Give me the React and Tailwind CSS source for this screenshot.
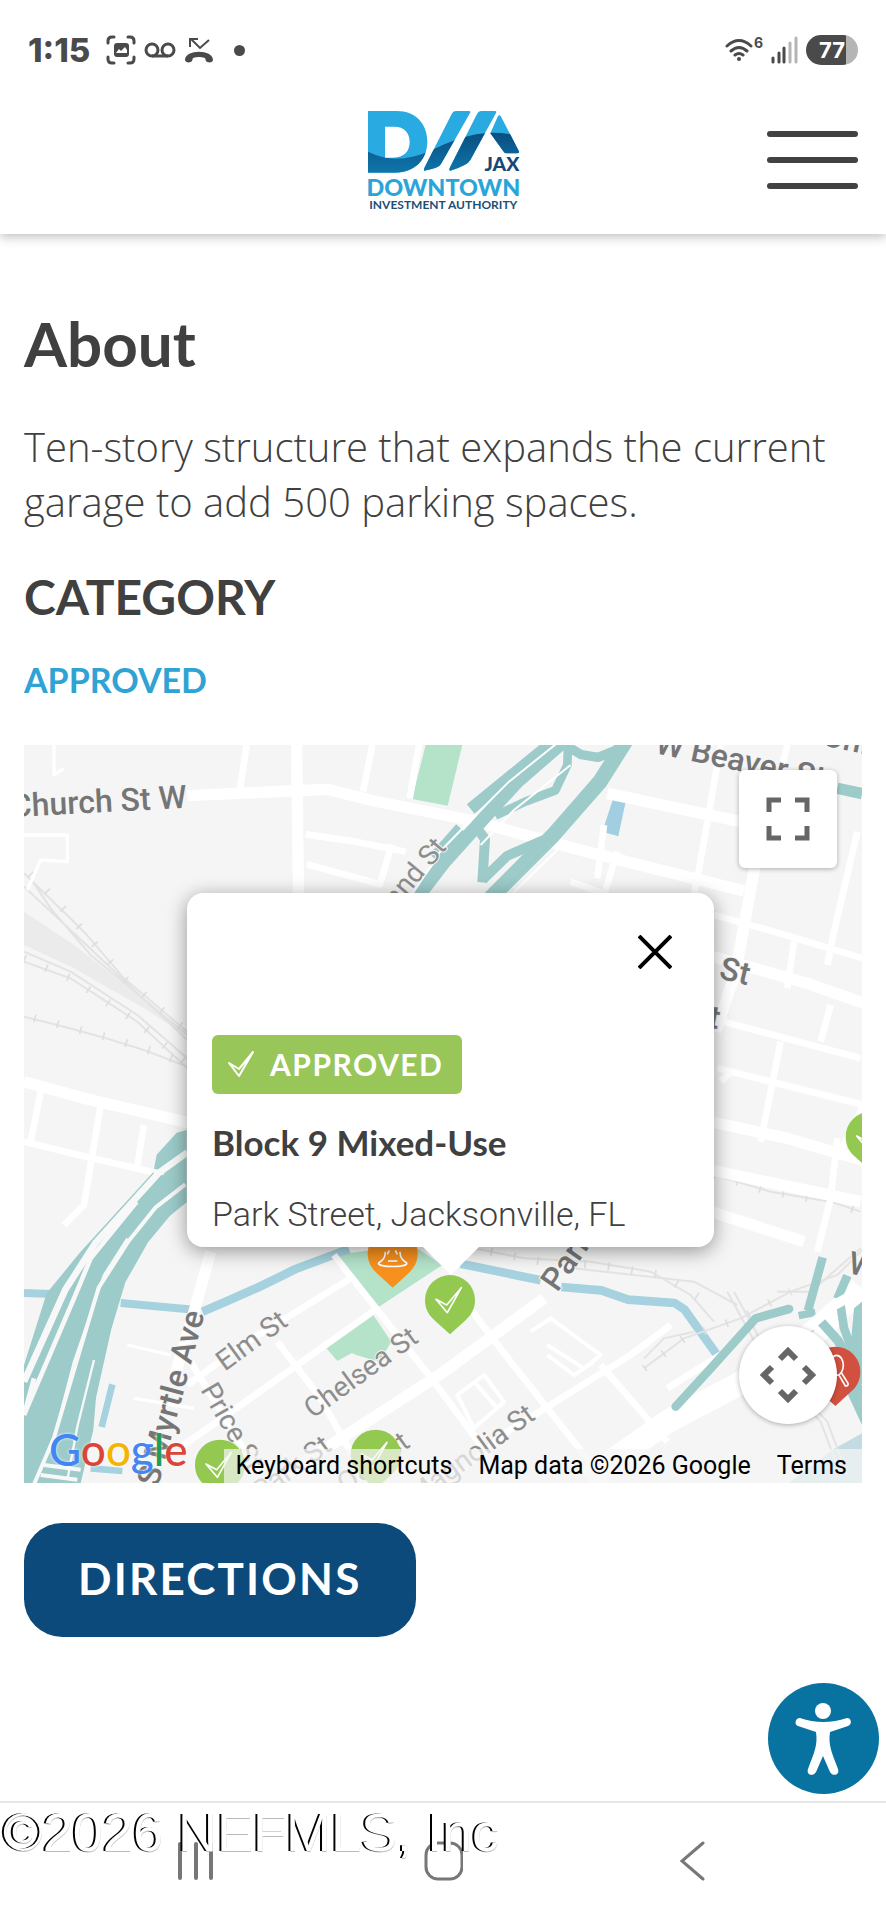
import React from 'react'
import clsx from 'clsx'

const PINS = [
  { x: 1106, y: 1450, color: '#f7901e', kind: 'cone' },
  { x: 1278, y: 1590, color: '#93c950', kind: 'check' },
  { x: 588, y: 2084, color: '#93c950', kind: 'check' },
  { x: 1055, y: 2054, color: '#93c950', kind: 'check' },
  { x: 2540, y: 1100, color: '#93c950', kind: 'check' },
  { x: 2434, y: 1805, color: '#d2503f', kind: 'search' },
]

function Pin({ x, y, color, kind }) {
  return (
    <g transform={`translate(${x} ${y})`}>
      <path d="M0 0a75 75 0 0 1 75 75c0 30-14 48-30 62L0 178l-45-41c-16-14-30-32-30-62A75 75 0 0 1 0 0z" fill={color} />
      {kind === 'check' && (
        <path d="M-42 73 L-10 90 L34 38 L-8 113 Z" fill="none" stroke="#fff" strokeWidth="5" strokeLinejoin="round" />
      )}
      {kind === 'cone' && (
        <path d="M-22 70 C-22 90 -30 96 -42 104 C-50 118 50 118 42 104 C30 96 22 90 22 70 M-14 98h28 M-16 78l6-12 M8 66l6 12" fill="none" stroke="#fff" strokeWidth="5" />
      )}
      {kind === 'search' && (
        <g fill="none" stroke="#fff" strokeWidth="5">
          <ellipse cx="4" cy="56" rx="20" ry="30" />
          <path d="M10 84l20 34q10 0 8-8L18 78" />
        </g>
      )}
    </g>
  )
}

function MapCanvas() {
  return (
    <svg viewBox="0 0 2514 2214" preserveAspectRatio="xMidYMid slice" className="block h-full w-full" aria-hidden="true">
      <rect width="2514" height="2214" fill="#f5f5f5" />

      {/* parks and water */}
      <g fill="#b4e3ca">
        <path d="M1205 0h110l-44 182-107-20z" />
        <path d="M930 1530l135 155 190-125-90-60z" />
        <path d="M906 1808l140-100 56 82-36 60-70-20-12-6-44 24z" />
      </g>
      <g fill="none" stroke="#a6d2df" strokeLinejoin="round">
        <path d="M0 1644l170 6M290 1674l220 20" strokeWidth="24" />
        <path d="M535 1700l80-34 90-40 110-54 160-60" strokeWidth="26" />
        <path d="M1310 1556l240 50M1612 1626l120 10 80 28 140 10 30 20 100 140" strokeWidth="26" />
        <path d="M265 1918l-32 128M200 2170l95 8" strokeWidth="20" />
      </g>
      <path d="M1767 162l38 8-22 104-48-14z" fill="#a1cfe1" />
      <path d="M2514 2065l-90 50-130 100h220z" fill="#c3dce4" />

      {/* rail yard */}
      <path d="M0 500L150 600 330 740 500 880 360 790 150 670 0 600z" fill="#ebebeb" />
      <g fill="none" stroke="#e3e3e3" strokeWidth="6">
        <path d="M0 385L180 560 300 700 490 860M20 400l60 90 120 140 290 240M0 425l150 140 340 320M0 620l140 60 200 130 150 130M0 650l140 50 200 130 150 140" />
        <path d="M0 815l120 30 110 30 130 40 130 50" />
        <path d="M2070 1290l170 50 180 30 90 30M1350 1510l150 30 200 10 180 30 120 70 70 80" />
        <path d="M1650 1570l180 20 180 20 130 70M1860 1870l120-90 170-60 150-80 140-50 90-90 60-70M1860 1840l60-60 90-20" />
        <path d="M2110 1640l120 220 160 170 60 160M2260 1640l100 0 150-130M2130 1640l120 220 160 170 60 160" />
      </g>
      <g fill="none" stroke="#dedede" strokeWidth="24" strokeDasharray="5 66">
        <path d="M20 385L180 560 300 700 490 860M0 640l140 60 200 130 150 130" />
        <path d="M30 820l120 30 110 30 130 40 130 50M2070 1290l170 50 180 30 90 30" />
        <path d="M1400 1520l150 30 180 10 180 30 120 70M1860 1870l120-90 170-60 150-80" />
      </g>

      {/* streets */}
      <g fill="none" stroke="#fff" strokeLinejoin="round">
        <g strokeWidth="34">
          <path d="M490 152l310-14 110-5 140 35 300 60 330 90 480 120" />
          <path d="M818 0l6 500" />
          <path d="M1750 145l400 85 120 30" />
          <path d="M2195 350l-60 330-60 180M2050 630l300 85 170 60" />
          <path d="M0 1010l180 50 320 75" />
          <path d="M2060 1130l230 50 240 70M2060 1275l450 95M2060 1400l280 90" />
          <path d="M560 1520l-50 180-60 200M1560 1660l-300 220-400 260-120 70" />
          <path d="M1690 2200l240-170 380-200 200-200" strokeWidth="70" />
        </g>
        <g strokeWidth="20">
          <path d="M668 0l-20 130M1045 0l-28 140M1185 0l-28 160M845 268l150 22 150 30M848 358l220 60 35-120M1740 240l-20 160M1780 320l-40 130M2090 0l-40 230-30 170-25 120M2290 0l-20 80" />
          <path d="M2070 510l180 50 300 90M2310 590l-20 140M2420 780l-30 110M2060 820l450 120M2270 890l-60 300M2080 970l440 110" />
          <path d="M2500 260l-70 300-20 100M1640 410l110 40M2090 1010l30-30" />
          <path d="M0 1190l180 44 240 55M230 1080l-50 300-60 60M50 1040l-30 150M360 1140l-20 120" />
          <path d="M980 1600l-310 190-180 130M1060 1690L820 1860 480 2100M930 1530l150 190 150 190 200 270M760 1790l130 170 100 180M1330 1680l130 170 300 380M500 1850l200 330" />
          <path d="M1940 1740l-120 90-370 230-160 140M1730 1860l200 230M1930 1930l190-120" />
          <path d="M1520 1760l60-40 150 110-50 40-110-70M1570 1830l80 60 60-40M1620 1960l100-70M1300 1950l80-60 60 80-90 80zM1350 1910l70 80" strokeWidth="12" />
          <path d="M2440 1180l-20 180-40 160M2514 1090l-70 140" />
          <path d="M0 270h130v80l-80-5-40 90M90 0v90l30-20M310 1800l130 30M330 1960l180 30" strokeWidth="10" />
        </g>
      </g>

      {/* interchange north of the popup */}
      <g fill="none" stroke="#9ccbc9" strokeLinejoin="round">
        <path d="M1575 0L1340 192" strokeWidth="36" />
        <path d="M1630 -20L1480 110 1370 230 1262 350 1170 470" strokeWidth="40" />
        <path d="M1632 0l-2 60-36 76-90 34-90 42" strokeWidth="26" />
        <path d="M1632 5l40 24 50 8 60-24" strokeWidth="28" />
        <path d="M1810 -20l-82 130-140 160-190 190" strokeWidth="46" />
        <path d="M1365 258l18 24-8 130M1375 405l74-72 110-48" strokeWidth="30" />
        <path d="M1310 250l-80 90" strokeWidth="36" />
        <path d="M2440 130l74 16" strokeWidth="34" />
      </g>
      <g fill="none" stroke="#fff" strokeWidth="6">
        <path d="M1605 -10L1455 110 1340 225 1250 318 1130 500" />
        <path d="M1640 60L1470 195 1370 300M1430 480l180-175" />
      </g>

      {/* freeway on the west side */}
      <path d="M488 1155l-30 8-60 66-10 52-222 244-98 120L0 1860v354h170l38-160 8-96 46-206 42-140 68-120 66-80 50-40z" fill="#9ccbc9" />
      <g fill="none" stroke="#f8f8f8" strokeLinejoin="round">
        <path d="M490 1222l-86 62-190 210-90 140L0 1910" strokeWidth="20" />
        <path d="M338 1370L200 1540 150 1660 0 2010M0 2010L30 1900" strokeWidth="14" />
        <path d="M484 1318l-90 70-80 100-90 140-54 180-80 270-60 140" strokeWidth="12" />
        <path d="M240 1590l-90 260-60 230M210 1845l-50 200-30 160M310 1480l-70 110" strokeWidth="7" />
        <path d="M380 1275l40 10M50 2190l110 14M60 2160l110 14" strokeWidth="12" />
      </g>

      {/* interchange on the east side */}
      <g fill="none" stroke="#9ccbc9" strokeLinejoin="round">
        <path d="M1955 1985l110-120 130-145 100-28" strokeWidth="26" strokeLinecap="round" />
        <path d="M2396 1537l-44 160" strokeWidth="26" />
        <path d="M2324 1712l50-10M2345 1758l20-10" strokeWidth="22" />
        <path d="M2470 1592l-30 70M2448 1670l12 80 30 80 30 50" strokeWidth="26" />
        <path d="M2388 1727l54 60 40 70 32 60" strokeWidth="28" />
      </g>
      <path d="M2514 1670l-24 20-8 90 20 70 12 10zM2440 1880l74 160v-120z" fill="#9ccbc9" />
      <path d="M2514 1634l-90 50-100 90" fill="none" stroke="#fff" strokeWidth="30" />

      {/* street names */}
      <g fontFamily="Roboto, sans-serif" fontWeight="500" fill="#757575" stroke="#f5f5f5" strokeWidth="6" paintOrder="stroke" fontSize="96">
        <text transform="translate(-38 216) rotate(-3)">Church St W</text>
        <text transform="translate(1890 24) rotate(12)">W Beaver St</text>
        <text transform="translate(2392 0) rotate(12)">Union St</text>
        <text transform="translate(2082 700) rotate(13)">St</text>
        <text transform="translate(2050 846) rotate(11)">t</text>
        <text transform="translate(1600 1644) rotate(-55)">Park St</text>
        <text transform="translate(2470 1585) rotate(10)">W</text>
        <text transform="translate(402 2228) rotate(-75)">S Myrtle Ave</text>
        <g fontWeight="400" fill="#8d8d8d" fontSize="84">
          <text transform="translate(1104 506) rotate(-50)">land St</text>
          <text transform="translate(602 1880) rotate(-36)">Elm St</text>
          <text transform="translate(866 2022) rotate(-36)">Chelsea St</text>
          <text transform="translate(528 1934) rotate(60)">Price St</text>
          <text transform="translate(1178 2282) rotate(-36)">Magnolia St</text>
          <text transform="translate(710 2270) rotate(-36)">Park St</text>
          <text transform="translate(965 2246) rotate(-36)">Oak St</text>
        </g>
      </g>

      {PINS.map(p => <Pin key={p.x} {...p} />)}
    </svg>
  )
}

function Logo() {
  const shapes = (
    <>
      <path fillRule="evenodd" d="M27 33h86c58 0 92 40 92 91 0 56-38 94-96 94H27z M78 80v93h24c34 0 50-20 50-47 0-28-16-46-46-46z" />
      <path d="M290 33h40q6 0 3 6L246 192q-6 12-50 20-3-2 0-8L278 42q4-9 12-9z" />
      <path d="M366 33h42q6 0 3 6L334 180q-8 16-60 32-5-2-2-8L354 42q4-9 12-9z" />
      <path d="M417 48q4-5 8 0l54 104q3 8-4 8h-34q-5 0-8-6l-39-54z" />
    </>
  )
  return (
    <svg viewBox="18 30 468 300" className="h-[100px] w-[156px] overflow-visible" role="img" aria-label="Downtown Investment Authority">
      <defs>
        <clipPath id="mark">{shapes}</clipPath>
        <linearGradient id="wave" x1="0" y1="0" x2="0" y2="1">
          <stop offset="0" stopColor="#0a4d80" />
          <stop offset="1" stopColor="#0f79ae" />
        </linearGradient>
      </defs>
      <g fill="#29aae1">{shapes}</g>
      <path clipPath="url(#mark)" d="M20 152c60 32 120 32 190 2 70-34 150-68 240-52l50 14v110H20z" fill="url(#wave)" />
      <g fontFamily="Lato, sans-serif">
        <text x="481" y="212" textAnchor="end" fontSize="58" fontWeight="900" fill="#14497a">JAX</text>
        <text x="253" y="288" textAnchor="middle" fontSize="70" fontWeight="900" fill="#29a5d8">DOWNTOWN</text>
        <text x="253" y="326" textAnchor="middle" fontSize="36" fontWeight="700" fill="#1c4f74">INVESTMENT AUTHORITY</text>
      </g>
    </svg>
  )
}

function StatusBar() {
  return (
    <div className="flex h-[86px] items-center justify-between px-7 pt-[14px] text-[#4a4a4a]">
      <div className="flex items-center gap-2">
        <span className="mr-2 font-['Inter',sans-serif] text-[33px] font-extrabold leading-8">1:15</span>
        <svg viewBox="0 0 30 30" className="size-[30px]" fill="none" stroke="currentColor" strokeWidth="3" strokeLinecap="round">
          <path d="M2 8V6q0-4 4-4h2M22 2h2q4 0 4 4v2M28 22v2q0 4-4 4h-2M8 28H6q-4 0-4-4v-2" />
          <rect x="8" y="8" width="15" height="14" rx="3" fill="currentColor" stroke="none" />
          <path d="M10 18l3-4 2 2 4-4 2 3v3z" fill="#fff" stroke="none" />
        </svg>
        <svg viewBox="0 0 32 30" className="h-[30px] w-8" fill="none" stroke="currentColor" strokeWidth="3">
          <circle cx="8" cy="15" r="6" /><circle cx="24" cy="15" r="6" /><path d="M8 21h16" />
        </svg>
        <svg viewBox="0 0 30 30" className="size-[30px]" fill="none" stroke="currentColor" strokeWidth="2">
          <path d="M25 5l-9 8L7 4M6 12V4h8" />
          <path d="M1 25c0-11 28-11 28 0 0 3-6 3-7 1l-1-3q-6-2-12 0l-1 3c-1 2-7 2-7-1z" fill="currentColor" stroke="none" />
        </svg>
        <span className="ml-3 size-[11px] rounded-full bg-[#4a4a4a]" />
      </div>
      <div className="flex items-center gap-2">
        <div className="flex items-start">
          <svg viewBox="0 0 28 26" className="h-[26px] w-7" fill="none" stroke="currentColor" strokeWidth="3" strokeLinecap="round">
            <path d="M2 9q12-11 24 0M6 14q8-7 16 0M10 18q4-3 8 0" />
            <circle cx="14" cy="22" r="2" fill="currentColor" stroke="none" />
          </svg>
          <span className="ml-px font-['Inter',sans-serif] text-sm font-bold leading-3">6</span>
        </div>
        <svg viewBox="0 0 27 28" className="h-7 w-[27px]" strokeWidth="3" strokeLinecap="round">
          <path d="M2 22v4M8 17v9M13 12v14" stroke="#4a4a4a" />
          <path d="M19 7v19M25 2v24" stroke="#b5b5b5" />
        </svg>
        <div className="flex h-[30px] w-[52px] items-center justify-center rounded-full bg-linear-to-r from-[#4a4a4a] from-77% to-[#b5b5b5] to-77% font-['Inter',sans-serif] text-[22px] font-bold leading-6 text-white">
          77
        </div>
      </div>
    </div>
  )
}

function Header() {
  return (
    <header className="relative bg-white shadow-[0_3px_10px_rgba(0,0,0,0.25)]">
      <StatusBar />
      <div className="grid h-[148px] grid-cols-3 items-center px-7">
        <a href="#home" className="col-start-2 justify-self-center"><Logo /></a>
        <button aria-label="Menu" className="flex w-[91px] flex-col gap-5 justify-self-end">
          <span className="h-[6px] rounded-full bg-[#424242]" />
          <span className="h-[6px] rounded-full bg-[#424242]" />
          <span className="h-[6px] rounded-full bg-[#424242]" />
        </button>
      </div>
    </header>
  )
}

function InfoWindow() {
  return (
    <div className="absolute left-[163px] top-[148px] h-[354px] w-[527px] rounded-2xl bg-white px-[25px] pt-[42px] shadow-[0_4px_20px_rgba(0,0,0,0.4)]">
      <div className="flex justify-end pr-[17px]">
        <button aria-label="Close">
          <svg viewBox="0 0 34 34" className="size-[34px]" stroke="#000" strokeWidth="4"><path d="M1 1l32 32M33 1L1 33" /></svg>
        </button>
      </div>
      <div className="mt-[66px] flex h-[59px] w-[250px] items-center gap-4 rounded-md bg-[#98c659] pb-[2px] pl-4 text-white">
        <svg viewBox="0 0 26 28" className="h-7 w-[26px] shrink-0" fill="none" stroke="currentColor" strokeWidth="2" strokeLinejoin="round">
          <path d="M1 13l10 6L25 2 11 26z" />
        </svg>
        <span className="font-['Lato',sans-serif] text-[30px] font-bold leading-8 tracking-wider">APPROVED</span>
      </div>
      <h2 className="mt-6 font-['Lato',sans-serif] text-[35px] font-bold leading-[48px] text-[#404040]">Block 9 Mixed-Use</h2>
      <p className="mt-6 font-['Roboto',sans-serif] text-[34px] font-light leading-[48px] text-[#404040]">Park Street, Jacksonville, FL</p>
      <svg viewBox="0 0 56 28" className="absolute left-[236px] top-full h-7 w-14"><path d="M0 0h56L28 28z" fill="#fff" /></svg>
    </div>
  )
}

const GOOGLE = [['G', 'text-[#4285f4]'], ['o', 'text-[#dc4437]'], ['o', 'text-[#f4b400]'], ['g', 'text-[#4285f4]'], ['l', 'text-[#1e9d58]'], ['e', 'text-[#dc4437]']]

function ProjectMap() {
  return (
    <section className="relative mt-[45px] aspect-[838/738] overflow-hidden" aria-label="Map">
      <MapCanvas />
      <InfoWindow />
      <button aria-label="Toggle fullscreen view" className="absolute right-[25px] top-[25px] flex size-[98px] items-center justify-center rounded-md bg-white shadow-[0_1px_5px_rgba(0,0,0,0.3)]">
        <svg viewBox="0 0 44 44" className="size-11" fill="none" stroke="#666" strokeWidth="5">
          <path d="M3 15V3h12M29 3h12v12M41 29v12H29M15 41H3V29" />
        </svg>
      </button>
      <button aria-label="Map camera controls" className="absolute bottom-[59px] right-[25px] flex size-[98px] items-center justify-center rounded-full bg-white shadow-[0_1px_5px_rgba(0,0,0,0.3)]">
        <svg viewBox="0 0 56 56" className="size-14" fill="none" stroke="#666" strokeWidth="6">
          <path d="M20 12l8-8 8 8M20 44l8 8 8-8M12 20l-8 8 8 8M44 20l8 8-8 8" />
        </svg>
      </button>
      <a href="#google" className="absolute bottom-1 left-[25px] font-['Lato',sans-serif] text-[44px] font-medium leading-[60px] [text-shadow:0_0_3px_#fff]">
        {GOOGLE.map(([ch, color], i) => <span key={i} className={clsx(color)}>{ch}</span>)}
      </a>
      <div className="absolute bottom-0 right-0 flex h-[34px] items-center gap-[26px] whitespace-nowrap bg-[#f5f5f5]/70 pl-3 pr-[15px] font-['Roboto',sans-serif] text-[25px] text-black">
        <button>Keyboard shortcuts</button>
        <span>Map data ©2026 Google</span>
        <a href="#terms">Terms</a>
      </div>
    </section>
  )
}

function SystemNav() {
  return (
    <nav className="relative h-[118px] border-t-2 border-[#e6e6e6]">
      <div className="mx-auto grid h-full w-[84%] grid-cols-3 place-items-center text-[#777]">
        <button aria-label="Recent apps">
          <svg viewBox="0 0 40 40" className="size-10" stroke="currentColor" strokeWidth="4" strokeLinecap="round"><path d="M5 3v34M21 3v34M36 3v34" /></svg>
        </button>
        <button aria-label="Home">
          <svg viewBox="0 0 40 40" className="size-10" fill="none" stroke="currentColor" strokeWidth="3"><rect x="3" y="2" width="36" height="36" rx="12" /></svg>
        </button>
        <button aria-label="Back">
          <svg viewBox="0 0 40 40" className="size-10" fill="none" stroke="currentColor" strokeWidth="3" strokeLinecap="round"><path d="M32 2L11 20l21 18" /></svg>
        </button>
      </div>
      <p className="absolute left-[3px] top-0 whitespace-nowrap font-['Liberation_Sans',sans-serif] text-[54px] leading-[58px] text-white [text-shadow:-2px_0_0_#000,0_1px_0_#bbb]">©2026 NEFMLS, Inc</p>
    </nav>
  )
}

export default function App() {
  return (
    <div className="bg-white font-['Lato',sans-serif] text-[#404040]">
      <Header />
      <main className="px-6 pt-[73px]">
        <h1 className="text-[62px] font-bold leading-[72px]">About</h1>
        <p className="mt-10 font-['Open_Sans',sans-serif] text-[40px] font-light leading-[55px]">
          Ten-story structure that expands the current garage to add 500 parking spaces.
        </p>
        <h2 className="mt-10 text-[48px] font-bold leading-[56px]">CATEGORY</h2>
        <p className="mt-[35px] text-[34px] font-bold leading-10 text-[#2fa3d4]">APPROVED</p>
        <ProjectMap />
        <a href="#directions" className="mt-10 inline-flex h-[114px] items-center rounded-[38px] bg-[#0b4a7b] px-[54px] pb-1 text-[44px] font-bold tracking-wider text-white">
          DIRECTIONS
        </a>
      </main>
      <div className="flex justify-end pb-[7px] pr-[7px] pt-[46px]">
        <button aria-label="Accessibility options" className="size-[111px] rounded-full bg-[#0873a0]">
          <svg viewBox="0 0 111 111" fill="#fff">
            <circle cx="55" cy="28" r="8" />
            <path d="M32 35q23 8 47 0c5 0 5 7 1 8L62 49c-2 13 2 21 8 37 2 6-5 8-8 3L55 73l-7 16c-3 5-10 3-8-3 6-16 10-24 8-37L30 43c-4-1-3-8 2-8z" />
          </svg>
        </button>
      </div>
      <SystemNav />
    </div>
  )
}
